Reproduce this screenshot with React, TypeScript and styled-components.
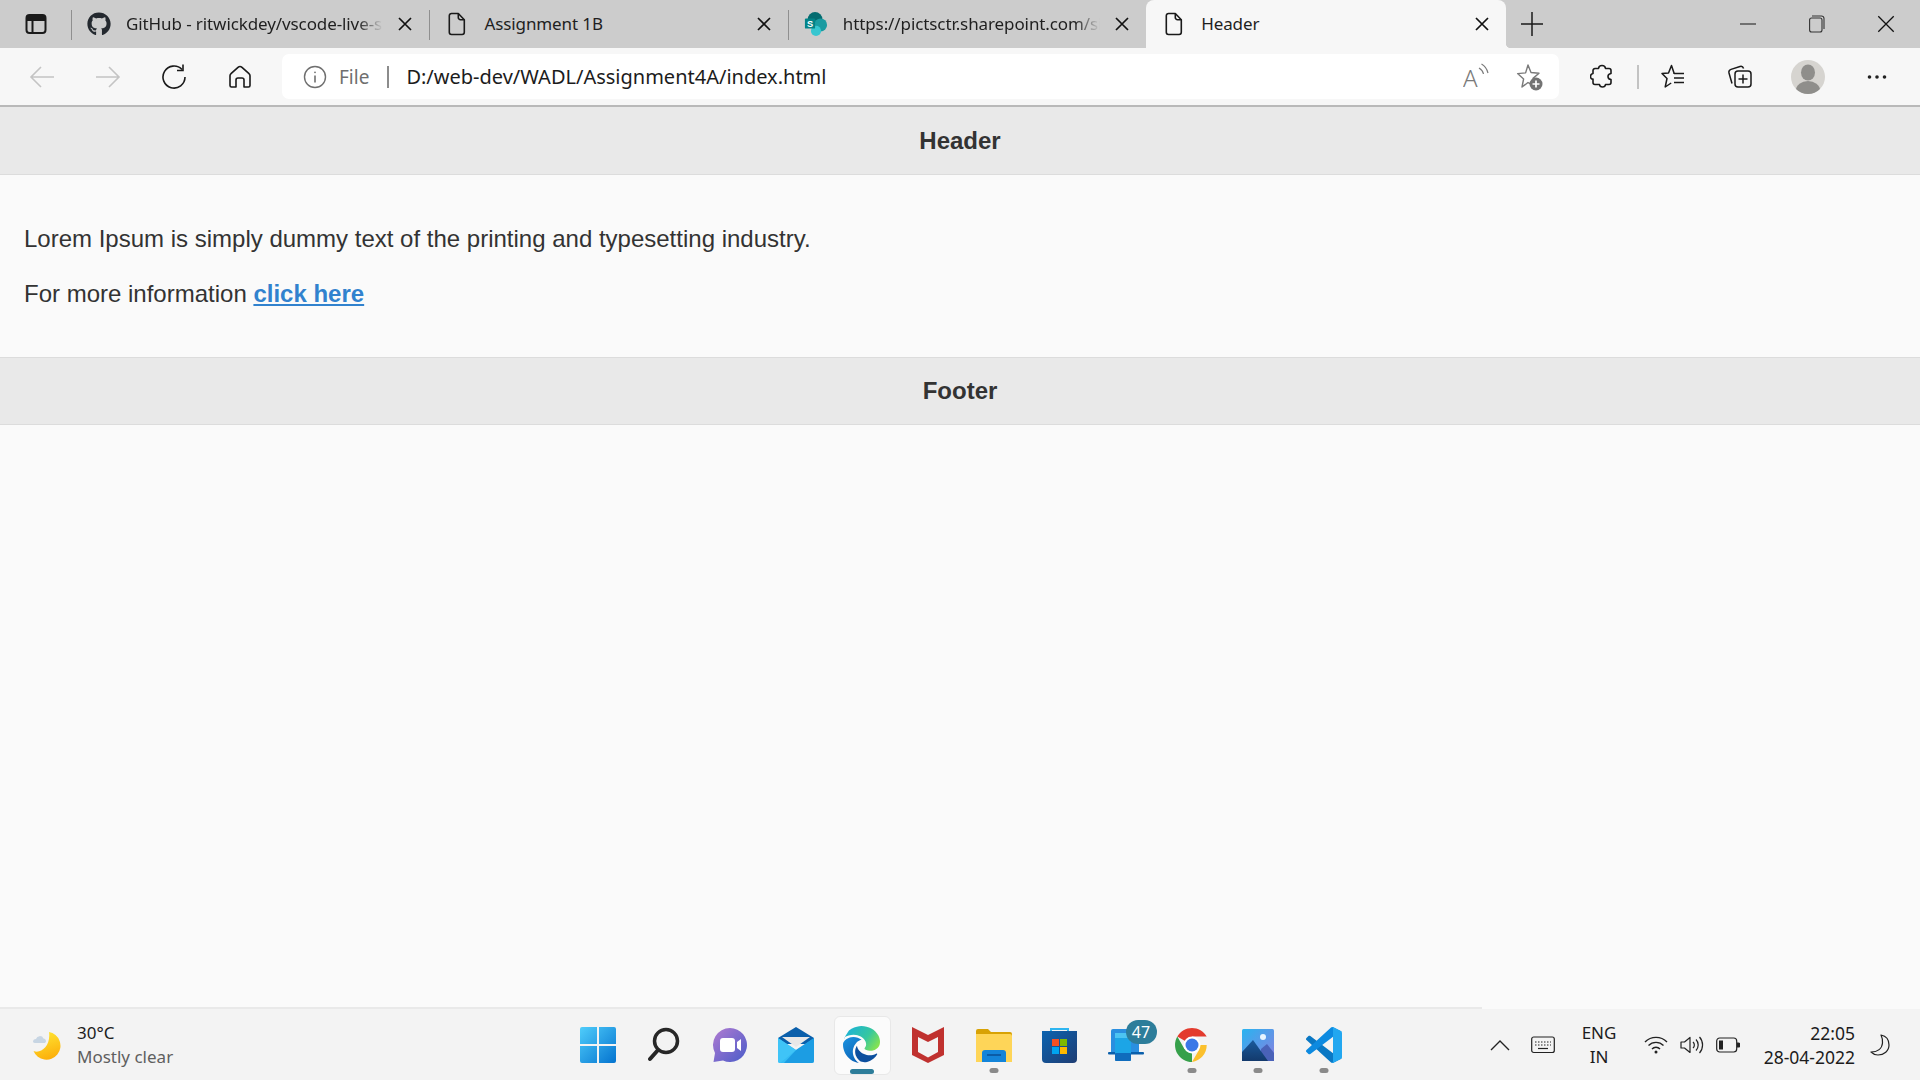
import { Fragment } from 'react';
import styled, { createGlobalStyle } from 'styled-components';
import { FaGithub } from 'react-icons/fa';

const uiFont = `"Noto Sans", "Open Sans", sans-serif`;

const GlobalStyle = createGlobalStyle`
  html, body {
    margin: 0;
    height: 100%;
    overflow: hidden;
    background: #fafafa;
  }
  #root {
    height: 100%;
  }
`;

const Screen = styled.div`
  display: flex;
  flex-direction: column;
  height: 1080px;
  width: 1920px;
  font-family: ${uiFont};
  color: #1c1c1c;
`;

const TabStrip = styled.div`
  display: flex;
  align-items: stretch;
  height: 48px;
  background: #cccccc;
  flex-shrink: 0;
`;

const SideButton = styled.div`
  width: 71px;
  display: flex;
  align-items: center;
  justify-content: center;
  box-sizing: border-box;
`;

const Tab = styled.div<{ $active?: boolean; $divider?: boolean }>`
  position: relative;
  box-sizing: border-box;
  width: ${({ $active }) => ($active ? '360px' : '358.4px')};
  display: flex;
  align-items: center;
  padding: 0 17px 0 16px;
  gap: 15px;
  background: ${({ $active }) => ($active ? '#f7f7f7' : 'transparent')};
  border-radius: ${({ $active }) => ($active ? '8px 8px 0 0' : '0')};

  &::before {
    content: ${({ $divider }) => ($divider ? "''" : 'none')};
    position: absolute;
    left: 0;
    top: 10px;
    height: 30px;
    width: 1px;
    background: #8f8f8f;
  }

  ${({ $active }) =>
    $active &&
    `
    &::after {
      content: '';
      position: absolute;
      right: -5px;
      bottom: 0;
      width: 5px;
      height: 5px;
      background: radial-gradient(circle at 100% 0, transparent 5px, #f7f7f7 5.5px);
    }
  `}
`;

const TabIconSlot = styled.span`
  width: 24px;
  height: 24px;
  display: flex;
  align-items: center;
  justify-content: center;
  flex-shrink: 0;
`;

const TabTitle = styled.span<{ $fade?: boolean }>`
  flex: 1;
  min-width: 0;
  white-space: nowrap;
  overflow: hidden;
  font-size: 17px;
  letter-spacing: -0.1px;
  color: #1f1f1f;
  padding-bottom: 2px;
  ${({ $fade }) =>
    $fade &&
    `
    mask-image: linear-gradient(to right, #000 90%, transparent 100%);
    -webkit-mask-image: linear-gradient(to right, #000 90%, transparent 100%);
  `}
`;

const NewTab = styled.div`
  width: 52px;
  display: flex;
  align-items: center;
  justify-content: center;
`;

const WindowControls = styled.div`
  margin-left: auto;
  display: flex;
  align-items: center;
`;

const WindowButton = styled.div`
  width: 69px;
  height: 48px;
  display: flex;
  align-items: center;
  justify-content: center;
`;

const Toolbar = styled.div`
  height: 57px;
  flex-shrink: 0;
  background: #f7f7f7;
  border-bottom: 2px solid #b9b9b9;
  display: flex;
  align-items: center;
  padding-left: 9px;
`;

const ToolButton = styled.div<{ $offset?: number }>`
  width: 66px;
  height: 45px;
  margin-left: ${({ $offset }) => $offset ?? 0}px;
  display: flex;
  align-items: center;
  justify-content: center;
  flex-shrink: 0;
`;

const AddressBar = styled.div`
  box-sizing: border-box;
  width: 1277px;
  height: 45px;
  margin: 0 10px 0 9px;
  padding: 0 15px 0 21px;
  background: #ffffff;
  border-radius: 7px;
  display: flex;
  align-items: center;
  flex-shrink: 0;
`;

const SiteLabel = styled.span`
  margin-left: 12px;
  font-size: 19px;
  color: #6f6f6f;
`;

const AddressDivider = styled.span`
  width: 2px;
  height: 22px;
  margin: 0 17px 0 18px;
  background: #8c8c8c;
`;

const Url = styled.span`
  flex: 1;
  font-size: 20px;
  letter-spacing: 0;
  color: #1c1c1c;
  white-space: nowrap;
`;

const AddressActions = styled.div`
  display: flex;
  align-items: center;
  gap: 27px;
`;

const ToolDivider = styled.span`
  width: 2px;
  height: 24px;
  margin: 0 2px;
  background: #c3c3c3;
  flex-shrink: 0;
`;

const Avatar = styled.span`
  width: 34px;
  height: 34px;
  border-radius: 50%;
  overflow: hidden;
  display: block;
`;

const Page = styled.div`
  flex: 1;
  background: #fafafa;
  font-family: 'Liberation Sans', Arial, sans-serif;
  color: #333333;
  font-size: 24px;
`;

const Band = styled.div<{ $topLine?: boolean }>`
  box-sizing: border-box;
  height: 68px;
  background: #e9e9e9;
  display: flex;
  align-items: center;
  justify-content: center;
  font-weight: 700;
  border-bottom: 1px solid #dcdcdc;
  border-top: ${({ $topLine }) => ($topLine ? '1px solid #dcdcdc' : 'none')};
`;

const Main = styled.div`
  display: flex;
  flex-direction: column;
  gap: 19px;
  padding: 46px 24px 45px;
`;

const Paragraph = styled.p`
  margin: 0;
  line-height: 36px;
`;

const MoreLink = styled.a`
  color: #3182ce;
  font-weight: 700;
  text-decoration: underline;
`;

const Taskbar = styled.div`
  position: relative;
  height: 71px;
  flex-shrink: 0;
  background: #f3f3f3;
  display: grid;
  grid-template-columns: 1fr auto 1fr;
  align-items: center;

  &::before {
    content: '';
    position: absolute;
    left: 0;
    top: -2px;
    width: 1482px;
    height: 2px;
    background: #e9e9e9;
  }
`;

const Weather = styled.div`
  display: flex;
  align-items: center;
  gap: 14px;
  padding-left: 31px;
`;

const WeatherText = styled.div`
  display: flex;
  flex-direction: column;
  font-size: 17px;
  line-height: 24px;
`;

const WeatherTemp = styled.span`
  color: #1c1c1c;
`;

const WeatherDesc = styled.span`
  color: #5f5f5f;
`;

const AppRow = styled.div`
  display: flex;
  height: 100%;
  padding-left: 1px;
`;

const AppCell = styled.div<{ $active?: boolean; $running?: boolean }>`
  position: relative;
  width: 66px;
  display: flex;
  align-items: center;
  justify-content: center;
  box-sizing: border-box;

  ${({ $active }) =>
    $active &&
    `
    &::before {
      content: '';
      position: absolute;
      left: 5px;
      right: 4px;
      top: 7px;
      bottom: 5px;
      background: #fbfbfb;
      border: 1px solid #e8e8e8;
      border-radius: 6px;
    }
  `}

  ${({ $running, $active }) =>
    ($running || $active) &&
    `
    &::after {
      content: '';
      position: absolute;
      left: 50%;
      bottom: ${$active ? '6px' : '7px'};
      width: ${$active ? '24px' : '9px'};
      height: 5px;
      border-radius: 3px;
      transform: translateX(-50%);
      background: ${$active ? '#2d7d9a' : '#8a8a8a'};
    }
  `}

  & > svg {
    position: relative;
    z-index: 1;
  }
`;

const Badge = styled.span`
  position: absolute;
  top: 11px;
  left: 33px;
  z-index: 2;
  width: 31px;
  height: 24px;
  border-radius: 12px;
  background: #2d7d9a;
  color: #ffffff;
  font-size: 16px;
  line-height: 24px;
  text-align: center;
`;

const Tray = styled.div`
  display: flex;
  align-items: center;
  justify-content: flex-end;
  height: 100%;
  padding-right: 15px;
`;

const TraySlot = styled.span<{ $width: number }>`
  width: ${({ $width }) => $width}px;
  display: flex;
  align-items: center;
  justify-content: center;
  flex-shrink: 0;
`;

const Locale = styled.div`
  width: 66px;
  text-align: center;
  font-size: 17px;
  line-height: 24px;
  color: #1c1c1c;
`;

const Clock = styled.div`
  width: 103px;
  text-align: right;
  font-size: 17.5px;
  line-height: 24px;
  color: #1c1c1c;
  white-space: nowrap;
`;

const Sidebar = () => (
  <svg width="22" height="22" viewBox="0 0 22 22" fill="none" stroke="#1a1a1a" strokeWidth="2">
    <rect x="1.5" y="2" width="19" height="18" rx="3" />
    <path d="M2 7h18M7.5 7v12.5" />
    <path d="M2 3h18v4H2z" fill="#1a1a1a" stroke="none" />
  </svg>
);

const Doc = () => (
  <svg width="18" height="24" viewBox="0 0 18 24" fill="none" stroke="#1a1a1a" strokeWidth="1.6" strokeLinejoin="round">
    <path d="M3.5 1.5h6.8l6 6.2v12.6a2.2 2.2 0 0 1-2.2 2.2H3.5a2.2 2.2 0 0 1-2.2-2.2V3.7a2.2 2.2 0 0 1 2.2-2.2z" />
    <path d="M10.3 1.5v4a2.2 2.2 0 0 0 2.2 2.2h3.8" />
  </svg>
);

const SharePoint = () => (
  <svg width="26" height="26" viewBox="0 0 26 26">
    <circle cx="12" cy="8" r="8" fill="#036c70" />
    <circle cx="18" cy="14" r="7" fill="#1a9ba1" />
    <circle cx="13" cy="20.5" r="5.5" fill="#37c6d0" />
    <rect x="1" y="7" width="11" height="11" rx="1" fill="#038387" />
    <text x="6.5" y="16" textAnchor="middle" fontSize="10" fontWeight="700" fill="#fff" fontFamily="Liberation Sans">
      S
    </text>
  </svg>
);

const CloseMark = ({ size = 14, weight = 1.7 }: { size?: number; weight?: number }) => (
  <svg width={size} height={size} viewBox="0 0 14 14" stroke="#111" strokeWidth={weight} fill="none">
    <path d="M1 1l12 12M13 1L1 13" />
  </svg>
);

const Plus = () => (
  <svg width="22" height="26" viewBox="0 0 22 26" stroke="#1a1a1a" strokeWidth="1.5">
    <path d="M0 13h22M11 1v24" />
  </svg>
);

const Minimize = () => (
  <svg width="16" height="2" viewBox="0 0 16 2">
    <path d="M0 1h16" stroke="#333" strokeWidth="1.2" />
  </svg>
);

const Restore = () => (
  <svg width="16" height="18" viewBox="0 0 16 18" fill="none" stroke="#333" strokeWidth="1.1">
    <rect x="0.6" y="3" width="12.4" height="14" rx="2" />
    <path d="M3 1h9.5A2.5 2.5 0 0 1 15 3.5V14" />
  </svg>
);

const ArrowBack = ({ flip }: { flip?: boolean }) => (
  <svg width="26" height="24" viewBox="0 0 26 24" fill="none" stroke="#c4c4c4" strokeWidth="1.6" style={flip ? { transform: 'scaleX(-1)' } : undefined}>
    <path d="M25 12H2M12 2L2 12l10 10" />
  </svg>
);

const Reload = () => (
  <svg width="26" height="26" viewBox="0 0 26 26" fill="none" stroke="#1a1a1a" strokeWidth="1.6">
    <path d="M21 5.5A11 11 0 1 0 24 13" />
    <path d="M22 0.5V6.5H16" />
  </svg>
);

const Home = () => (
  <svg width="24" height="24" viewBox="0 0 24 24" fill="none" stroke="#1a1a1a" strokeWidth="1.6" strokeLinejoin="round">
    <path d="M10 2.4a3 3 0 0 1 4 0l7 6.3a2.8 2.8 0 0 1 1 2.1v9.7a1.5 1.5 0 0 1-1.5 1.5H16v-7a2 2 0 0 0-2-2h-4a2 2 0 0 0-2 2v7H3.500A1.500 1.500 0 0 1 2 20.500v-9.700a2.800 2.800 0 0 1 1-2.100z" />
  </svg>
);

const Info = () => (
  <svg width="24" height="24" viewBox="0 0 24 24" fill="none" stroke="#6f6f6f" strokeWidth="1.4">
    <circle cx="12" cy="12" r="10.500" />
    <path d="M12 10.500v7" strokeWidth="1.6" />
    <circle cx="12" cy="7.300" r="0.9" fill="#6f6f6f" stroke="none" />
  </svg>
);

const ReadAloud = () => (
  <svg width="26" height="28" viewBox="0 0 26 28" fill="none" stroke="#7a7a7a" strokeWidth="1.2">
    <text x="0" y="24" fontSize="24" fontFamily="Noto Sans" fontWeight="300" fill="#7a7a7a" stroke="none">
      A
    </text>
    <path d="M16 5c2.500 1.500 4 3.500 4.500 6M18.500 1c3.500 2 5.500 5 6.500 9" />
  </svg>
);

const StarAdd = () => (
  <svg width="28" height="28" viewBox="0 0 28 28" fill="none">
    <path d="M12 2l3 7.500 8 .7-6 5.200 1.600 8L12 19.500 6 24l1.600-8-6-5.400 8-.7z" stroke="#7a7a7a" strokeWidth="1.4" strokeLinejoin="round" />
    <circle cx="20" cy="21" r="6.500" fill="#737373" />
    <path d="M20 17.500v7M16.500 21h7" stroke="#fff" strokeWidth="1.700" />
  </svg>
);

const Extensions = () => (
  <svg width="24" height="25" viewBox="0 0 24 25" fill="none" stroke="#1a1a1a" strokeWidth="1.600" strokeLinejoin="round">
    <path d="M12 1.500c2 0 3.300 1.300 3.500 3h3.500a2 2 0 0 1 2 2v3c-1.800.2-3 1.500-3 3s1.200 2.800 3 3v3a2 2 0 0 1-2 2h-3.500c-.2 1.500-1.500 2.500-3 2.500s-2.800-1-3-2.500H5a2 2 0 0 1-2-2v-3.500C1.500 15.300.5 14 .5 12.500s1-2.800 2.500-3V6.500a2 2 0 0 1 2-2h3.500c.2-1.700 1.500-3 3.500-3z" />
  </svg>
);

const Favorites = () => (
  <svg width="26" height="28" viewBox="0 0 26 28" fill="none" stroke="#1a1a1a" strokeWidth="1.500" strokeLinejoin="round">
    <path d="M13 11V10l-2.500-7.500L7.500 10 1 10.500l5 5-1.800 8.500 6-4" />
    <path d="M13 10.500h10M13 15h10M13 19.500h10" />
  </svg>
);

const Collections = () => (
  <svg width="28" height="28" viewBox="0 0 28 28" fill="none" stroke="#1a1a1a" strokeWidth="1.500" strokeLinejoin="round">
    <path d="M6 20.500L3 10a3 3 0 0 1 2-3.600L14 3.500c1.600-.5 3 .3 3.600 2" />
    <rect x="9" y="8" width="16" height="16" rx="3" />
    <path d="M17 11.500v9M12.500 16h9" />
  </svg>
);

const Profile = () => (
  <svg width="34" height="34" viewBox="0 0 34 34">
    <rect width="34" height="34" fill="#d6d4d0" />
    <ellipse cx="17" cy="12.500" rx="7" ry="8" fill="#8f8e8b" />
    <ellipse cx="17" cy="30" rx="12" ry="9" fill="#8f8e8b" />
  </svg>
);

const Dots = () => (
  <svg width="20" height="4" viewBox="0 0 20 4" fill="#222">
    <circle cx="2.500" cy="2" r="1.800" />
    <circle cx="10" cy="2" r="1.800" />
    <circle cx="17.500" cy="2" r="1.800" />
  </svg>
);

const Moon = () => (
  <svg width="32" height="32" viewBox="0 0 32 32">
    <defs>
      <linearGradient id="moonFill" x1="0.3" y1="0" x2="0.6" y2="1">
        <stop offset="0" stopColor="#ffe533" />
        <stop offset="1" stopColor="#fcae0a" />
      </linearGradient>
    </defs>
    <path d="M18 3a14 14 0 1 1-15.500 19C10 25 20 17 18 3z" fill="url(#moonFill)" />
    <path d="M2 13a3 3 0 0 1 3-3 4 4 0 0 1 7.500-.5A2.500 2.500 0 0 1 14 14H4a2.500 2.500 0 0 1-2-1z" fill="#c7d5e3" />
  </svg>
);

const Start = () => (
  <svg width="36" height="36" viewBox="0 0 36 36">
    <defs>
      <linearGradient id="startFill" x1="0" y1="0" x2="1" y2="1">
        <stop offset="0" stopColor="#4fcdfb" />
        <stop offset="1" stopColor="#0473cf" />
      </linearGradient>
    </defs>
    <path d="M2 0h15v17H0V2a2 2 0 0 1 2-2zM19 0h15a2 2 0 0 1 2 2v15H19zM0 19h17v17H2a2 2 0 0 1-2-2zM19 19h17v15a2 2 0 0 1-2 2H19z" fill="url(#startFill)" />
  </svg>
);

const Search = () => (
  <svg width="32" height="36" viewBox="0 0 32 36" fill="none" stroke="#272727">
    <circle cx="18" cy="14" r="11.500" strokeWidth="3.500" />
    <path d="M10 23L2 32" strokeWidth="4" strokeLinecap="round" />
  </svg>
);

const Chat = () => (
  <svg width="36" height="36" viewBox="0 0 36 36">
    <defs>
      <linearGradient id="chatFill" x1="0" y1="0" x2="1" y2="1">
        <stop offset="0" stopColor="#b07ad1" />
        <stop offset="1" stopColor="#4a5cc9" />
      </linearGradient>
    </defs>
    <path d="M18 1a17 17 0 1 1-7 32.500L1.500 35 3 26A17 17 0 0 1 18 1z" fill="url(#chatFill)" />
    <rect x="8" y="11" width="15" height="14" rx="3" fill="#fff" />
    <path d="M25 15l4-3v12l-4-3z" fill="#fff" />
  </svg>
);

const Mail = () => (
  <svg width="36" height="36" viewBox="0 0 36 36">
    <path d="M0 11L18 0l18 11v6H0z" fill="#0a5fab" />
    <path d="M4 10h28l-14 10z" fill="#e8e8e8" />
    <path d="M0 11l18 12 18-12v23a2 2 0 0 1-2 2H2a2 2 0 0 1-2-2z" fill="#35bdf4" />
    <path d="M36 34a2 2 0 0 1-2 2H6l12-13 18-12z" fill="#1390dc" opacity="0.7" />
    <path d="M0 34V11l18 12L2 36a2 2 0 0 1-2-2z" fill="#3fc4f7" />
  </svg>
);

const Edge = () => (
  <svg width="37" height="37" viewBox="0 0 24 24">
    <defs>
      <linearGradient id="edgeTop" x1="0" y1="0.2" x2="1" y2="0.7">
        <stop offset="0" stopColor="#1bb2d9" />
        <stop offset="0.6" stopColor="#35c7a0" />
        <stop offset="1" stopColor="#86e34f" />
      </linearGradient>
      <linearGradient id="edgeLow" x1="0.2" y1="0" x2="0.8" y2="1">
        <stop offset="0" stopColor="#1a8fdc" />
        <stop offset="1" stopColor="#0b5fb4" />
      </linearGradient>
    </defs>
    <path d="M21.860 17.860q.14 0 .25.12.1.13.1.25t-.11.33l-.32.46-.43.53-.44.5q-.21.25-.38.42l-.22.23q-.58.53-1.340 1.040-.76.51-1.600.91-.86.4-1.740.64t-1.670.24q-.9 0-1.690-.28-.8-.28-1.480-.78-.68-.5-1.220-1.170-.53-.66-.92-1.440-.38-.77-.58-1.600-.2-.83-.2-1.670 0-1 .32-1.960.33-.97.87-1.800.14.95.55 1.770.41.82 1.020 1.500.6.68 1.380 1.210.78.54 1.640.9.86.36 1.770.56.92.2 1.800.2 1.120 0 2.180-.24 1.060-.23 2.060-.72l.2-.1.2-.05z" fill="#0c4f9e" />
    <path d="M6.360 16.590q0 1.100.27 2.150.27 1.060.78 2.030.51.96 1.240 1.770.74.82 1.660 1.400-1.470-.2-2.800-.74-1.330-.55-2.480-1.370-1.150-.83-2.080-1.900-.92-1.070-1.580-2.330T.36 14.940Q0 13.540 0 12.060q0-.81.32-1.490.31-.68.83-1.230.53-.55 1.200-.96.66-.4 1.350-.66.74-.27 1.500-.39.78-.12 1.550-.12.7 0 1.420.1.720.12 1.400.35.68.23 1.320.57.63.35 1.160.83-.35 0-.7.07-.33.07-.65.23v-.02q-.63.28-1.200.74-.57.46-1.050 1.040-.48.58-.87 1.260-.38.67-.65 1.390-.27.71-.42 1.440-.15.72-.15 1.380z" fill="url(#edgeLow)" />
    <path d="M11.960.06q1.700 0 3.330.39 1.630.38 3.070 1.150 1.430.77 2.620 1.930 1.180 1.160 1.980 2.700.49.94.76 1.960.28 1 .28 2.080 0 .89-.23 1.700-.24.8-.69 1.480-.45.68-1.100 1.220-.64.53-1.450.88-.54.24-1.110.36-.58.13-1.160.13-.42 0-.97-.03-.54-.03-1.100-.12-.55-.1-1.050-.28-.5-.19-.84-.5-.12-.09-.23-.24-.1-.16-.1-.33 0-.15.16-.35.16-.2.35-.5.2-.28.36-.68.16-.4.16-.95 0-1.060-.4-1.960-.4-.91-1.060-1.640-.66-.74-1.520-1.280-.86-.55-1.790-.89-.84-.3-1.720-.44-.87-.14-1.760-.14-1.550 0-3.060.45-1.500.45-2.830 1.250V8.500q.6-2.200 1.950-3.900Q3.600 2.800 5.500 1.800 7.200.9 9 .5 10.500.06 11.960.06z" fill="url(#edgeTop)" />
  </svg>
);

const McAfee = () => (
  <svg width="32" height="36" viewBox="0 0 32 36">
    <path fillRule="evenodd" d="M0 0l16 8 16-8v28l-16 8-16-8zM6 10v15l10 5.500L26 25V10l-10 5z" fill="#c0312f" />
  </svg>
);

const Folder = () => (
  <svg width="36" height="34" viewBox="0 0 36 34">
    <path d="M0 3a2 2 0 0 1 2-2h10l3 3h19a2 2 0 0 1 2 2v4H0z" fill="#d8a205" />
    <path d="M0 6h14l4 0h16a2 2 0 0 1 2 2v26H0z" fill="#fed558" />
    <path d="M6 34V25a3 3 0 0 1 3-3h18a3 3 0 0 1 3 3v9z" fill="#1384d9" />
    <path d="M11 27h14" stroke="#0a4f94" strokeWidth="1.500" />
  </svg>
);

const Store = () => (
  <svg width="35" height="36" viewBox="0 0 35 36">
    <defs>
      <linearGradient id="storeFill" x1="0" y1="0" x2="1" y2="1">
        <stop offset="0" stopColor="#0b63b0" />
        <stop offset="1" stopColor="#1f3d73" />
      </linearGradient>
    </defs>
    <path d="M9 5V2h17v3" fill="none" stroke="#2eb5f0" strokeWidth="2" />
    <path d="M0 4h35v28a4 4 0 0 1-4 4H4a4 4 0 0 1-4-4z" fill="url(#storeFill)" />
    <rect x="10" y="12" width="7" height="7" fill="#f25022" />
    <rect x="18" y="12" width="7" height="7" fill="#7fba00" />
    <rect x="10" y="20" width="7" height="7" fill="#00a4ef" />
    <rect x="18" y="20" width="7" height="7" fill="#ffb900" />
  </svg>
);

const PhoneLink = () => (
  <svg width="36" height="32" viewBox="0 0 36 32">
    <path d="M3 2a2 2 0 0 1 2-2h24a2 2 0 0 1 2 2v22H3z" fill="#2a8fe0" />
    <rect y="23" width="36" height="2.500" rx="1" fill="#0a5fab" />
    <rect x="7" y="4" width="16" height="28" rx="2" fill="#1ca5e6" />
    <rect x="7" y="4" width="16" height="5" fill="#4cc4f2" />
    <rect x="7" y="24" width="16" height="8" rx="1" fill="#0f6cbd" />
  </svg>
);

const Chrome = () => (
  <svg width="34" height="34" viewBox="0 0 34 34">
    <path d="M17 17L2.300 8.500A17 17 0 0 1 31.700 8.500H17z" fill="#e33b2e" />
    <path d="M17 17H31.700A17 17 0 0 1 17 34l7.400-12.800z" fill="#fbc02d" />
    <path d="M17 17l-0 17A17 17 0 0 1 2.300 8.500L9.600 21.200z" fill="#36a04a" />
    <circle cx="17" cy="17" r="8.500" fill="#fff" />
    <circle cx="17" cy="17" r="6.500" fill="#3b78e7" />
  </svg>
);

const Photos = () => (
  <svg width="32" height="32" viewBox="0 0 32 32">
    <defs>
      <linearGradient id="photoSky" x1="0" y1="0" x2="1" y2="1">
        <stop offset="0" stopColor="#28b4f0" />
        <stop offset="1" stopColor="#8a7fe0" />
      </linearGradient>
      <linearGradient id="photoHill" x1="0" y1="0" x2="0" y2="1">
        <stop offset="0" stopColor="#1a5a9c" />
        <stop offset="1" stopColor="#133a6c" />
      </linearGradient>
    </defs>
    <rect width="32" height="32" rx="1.500" fill="url(#photoSky)" />
    <circle cx="21" cy="8" r="3" fill="#e8f5ff" />
    <path d="M19 20l6-5 7 9v8H19z" fill="#4a62b8" />
    <path d="M0 23L11 11l15 21H0z" fill="url(#photoHill)" />
  </svg>
);

const VsCode = () => (
  <svg width="36" height="36" viewBox="0 0 100 100">
    <path d="M96.461 89.204L75.857 99.125C73.472 100.273 70.622 99.788 68.75 97.917L1.299 36.417C-.516 34.763-.514 31.906 1.303 30.255L6.813 25.246C8.298 23.896 10.535 23.796 12.134 25.010L93.361 86.630C96.086 88.697 100 86.754 100 83.333V83.573C100 85.974 98.625 88.162 96.461 89.204Z" fill="#0a78c4" />
    <path d="M96.461 10.796L75.857.876C73.472-.273 70.622.212 68.750 2.083L1.299 63.583C-.516 65.237-.514 68.094 1.303 69.745L6.813 74.754C8.298 76.104 10.535 76.204 12.134 74.990L93.361 13.370C96.086 11.303 100 13.246 100 16.667V16.428C100 14.027 98.625 11.838 96.461 10.796Z" fill="#0d8ae0" />
    <path d="M75.858 99.126C73.472 100.274 70.622 99.789 68.750 97.917C71.056 100.223 75 98.590 75 95.328V4.672C75 1.410 71.056-.223 68.750 2.083C70.622.211 73.472-.274 75.858.874L96.459 10.781C98.623 11.822 100 14.011 100 16.413V83.587C100 85.989 98.623 88.179 96.459 89.220L75.858 99.126Z" fill="#22a7f0" />
  </svg>
);

const Chevron = () => (
  <svg width="20" height="12" viewBox="0 0 20 12" fill="none" stroke="#222" strokeWidth="1.400">
    <path d="M1 11l9-9 9 9" />
  </svg>
);

const Keyboard = () => (
  <svg width="24" height="18" viewBox="0 0 24 18" fill="none" stroke="#222" strokeWidth="1.200">
    <rect x="0.700" y="1" width="22.600" height="15.500" rx="2" />
    <path d="M4 6h16M4 9h16" strokeDasharray="1.500 1.500" />
    <path d="M7 12.500h10" />
  </svg>
);

const Wifi = () => (
  <svg width="24" height="18" viewBox="0 0 24 18" fill="none" stroke="#222" strokeWidth="1.400">
    <path d="M1 6a15.500 15.500 0 0 1 22 0M4.500 9.500a10.500 10.500 0 0 1 15 0M8 13a5.500 5.500 0 0 1 8 0" />
    <circle cx="12" cy="16" r="1.500" fill="#222" stroke="none" />
  </svg>
);

const Volume = () => (
  <svg width="24" height="20" viewBox="0 0 24 20" fill="none" stroke="#222" strokeWidth="1.200" strokeLinejoin="round">
    <path d="M1 7h3.500L10 2.500v15L4.500 13H1z" />
    <path d="M13 7a4 4 0 0 1 0 6M16 4.500a8 8 0 0 1 0 11M19.500 2a12 12 0 0 1 0 16" />
  </svg>
);

const Battery = () => (
  <svg width="24" height="16" viewBox="0 0 24 16" fill="none" stroke="#222" strokeWidth="1.200">
    <rect x="0.700" y="1" width="20" height="14" rx="3" />
    <rect x="3" y="3.500" width="4" height="9" fill="#222" stroke="none" />
    <path d="M21 6h1.500a1 1 0 0 1 1 1v2a1 1 0 0 1-1 1H21" fill="#222" />
  </svg>
);

const NightMode = () => (
  <svg width="20" height="22" viewBox="0 0 20 22" fill="none" stroke="#222" strokeWidth="1.200" strokeLinejoin="round">
    <path d="M11 1c5 1 8 5 8 10 0 6-5 10-11 10-3 0-5-1-7-3 6 0 11-3 11.500-9 .2-3-.5-6-1.500-8z" />
  </svg>
);

const tabs = [
  { title: 'GitHub - ritwickdey/vscode-live-server', icon: <FaGithub size={24} color="#24292f" />, fade: true },
  { title: 'Assignment 1B', icon: <Doc /> },
  { title: 'https://pictsctr.sharepoint.com/sites/', icon: <SharePoint />, fade: true },
  { title: 'Header', icon: <Doc />, active: true },
];

const apps = [
  { key: 'start', icon: <Start /> },
  { key: 'search', icon: <Search /> },
  { key: 'chat', icon: <Chat /> },
  { key: 'mail', icon: <Mail /> },
  { key: 'edge', icon: <Edge />, active: true },
  { key: 'mcafee', icon: <McAfee /> },
  { key: 'folder', icon: <Folder />, running: true },
  { key: 'store', icon: <Store /> },
  { key: 'phone', icon: <PhoneLink />, badge: '47' },
  { key: 'chrome', icon: <Chrome />, running: true },
  { key: 'photos', icon: <Photos />, running: true },
  { key: 'vscode', icon: <VsCode />, running: true },
];

export default function App() {
  return (
    <Fragment>
      <GlobalStyle />
      <Screen>
        <TabStrip>
          <SideButton>
            <Sidebar />
          </SideButton>
          {tabs.map((tab, i) => (
            <Tab key={tab.title} $active={tab.active} $divider={i < 3 && !tab.active}>
              <TabIconSlot>{tab.icon}</TabIconSlot>
              <TabTitle $fade={tab.fade}>{tab.title}</TabTitle>
              <CloseMark />
            </Tab>
          ))}
          <NewTab>
            <Plus />
          </NewTab>
          <WindowControls>
            <WindowButton>
              <Minimize />
            </WindowButton>
            <WindowButton>
              <Restore />
            </WindowButton>
            <WindowButton>
              <CloseMark size={18} weight={1} />
            </WindowButton>
          </WindowControls>
        </TabStrip>

        <Toolbar>
          <ToolButton>
            <ArrowBack />
          </ToolButton>
          <ToolButton>
            <ArrowBack flip />
          </ToolButton>
          <ToolButton>
            <Reload />
          </ToolButton>
          <ToolButton>
            <Home />
          </ToolButton>
          <AddressBar>
            <Info />
            <SiteLabel>File</SiteLabel>
            <AddressDivider />
            <Url>D:/web-dev/WADL/Assignment4A/index.html</Url>
            <AddressActions>
              <ReadAloud />
              <StarAdd />
            </AddressActions>
          </AddressBar>
          <ToolButton>
            <Extensions />
          </ToolButton>
          <ToolDivider />
          <ToolButton>
            <Favorites />
          </ToolButton>
          <ToolButton>
            <Collections />
          </ToolButton>
          <ToolButton $offset={2}>
            <Avatar>
              <Profile />
            </Avatar>
          </ToolButton>
          <ToolButton $offset={3}>
            <Dots />
          </ToolButton>
        </Toolbar>

        <Page>
          <Band>Header</Band>
          <Main>
            <Paragraph>Lorem Ipsum is simply dummy text of the printing and typesetting industry.</Paragraph>
            <Paragraph>
              For more information <MoreLink href="#">click here</MoreLink>
            </Paragraph>
          </Main>
          <Band $topLine>Footer</Band>
        </Page>

        <Taskbar>
          <Weather>
            <Moon />
            <WeatherText>
              <WeatherTemp>30°C</WeatherTemp>
              <WeatherDesc>Mostly clear</WeatherDesc>
            </WeatherText>
          </Weather>
          <AppRow>
            {apps.map((app) => (
              <AppCell key={app.key} $active={app.active} $running={app.running}>
                {app.icon}
                {app.badge && <Badge>{app.badge}</Badge>}
              </AppCell>
            ))}
          </AppRow>
          <Tray>
            <TraySlot $width={40}>
              <Chevron />
            </TraySlot>
            <TraySlot $width={46}>
              <Keyboard />
            </TraySlot>
            <Locale>ENG<br />IN</Locale>
            <TraySlot $width={48}>
              <Wifi />
            </TraySlot>
            <TraySlot $width={24}>
              <Volume />
            </TraySlot>
            <TraySlot $width={48}>
              <Battery />
            </TraySlot>
            <Clock>22:05<br />28-04-2022</Clock>
            <TraySlot $width={50}>
              <NightMode />
            </TraySlot>
          </Tray>
        </Taskbar>
      </Screen>
    </Fragment>
  );
}
